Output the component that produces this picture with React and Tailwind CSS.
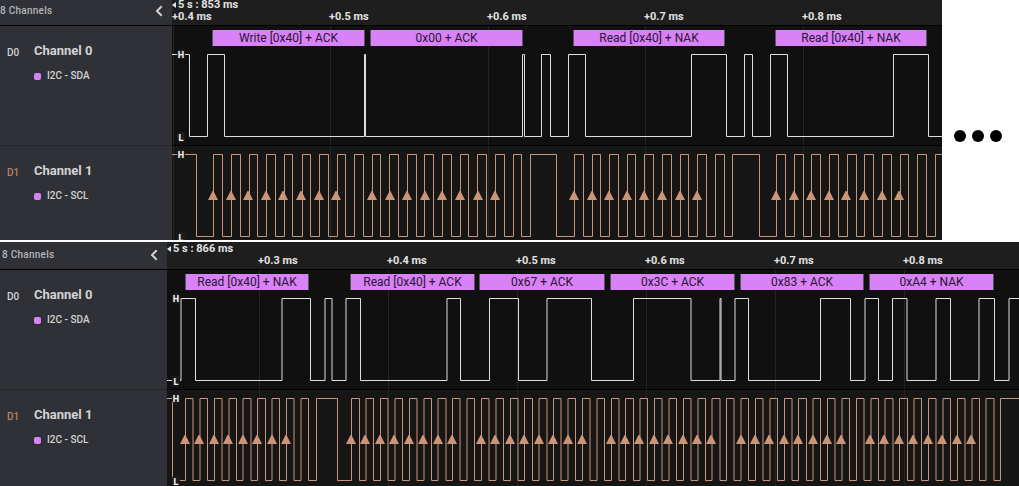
import React from "react";

const round = (x) => Math.round(x * 2) / 2;

// Clock edges for `count` pulses: rise, fall, rise, fall ...
function pulses(start, count, period = 14.43, high = 7.6) {
  const edges = [];
  for (let n = 0; n < count; n++) {
    edges.push(round(start + n * period), round(start + n * period + high));
  }
  return edges;
}

// Sampling arrows sit on the first eight clock rises of every byte.
function samples(starts, period) {
  return starts.flatMap((s) => Array.from({ length: 8 }, (_, n) => Math.round(s + n * period)));
}

const CAPTURES = [
  {
    id: "write",
    origin: "5 s : 853 ms",
    sidebar: "w-[172px]",
    header: "h-[26px]",
    inset: "pl-0",
    clockRow: "h-[94px]",
    ticks: [
      { x: 1, label: "+0.4 ms" },
      { x: 158, label: "+0.5 ms" },
      { x: 316, label: "+0.6 ms" },
      { x: 473, label: "+0.7 ms" },
      { x: 631, label: "+0.8 ms" },
    ],
    frames: [
      { x: 40, w: 153, text: "Write [0x40] + ACK" },
      { x: 198, w: 153, text: "0x00 + ACK" },
      { x: 401, w: 152, text: "Read [0x40] + NAK" },
      { x: 603, w: 152, text: "Read [0x40] + NAK" },
    ],
    sda: {
      high: true,
      edges: [17, 35, 52, 192, 193, 350, 352, 369, 378, 396, 413, 519, 554, 572, 580, 598, 615, 721, 756],
    },
    scl: {
      high: true,
      edges: [
        24, 41, 50, 59, 68, 77, 85, 94, 103, 112, 120, 130, 138, 147, 156, 165, 173, 182, 191, 200, 208, 217,
        226, 235, 244, 252, 261, 270, 279, 288, 296, 305, 314, 323, 332, 341, 349, 358, 384, 402, 411, 420,
        428, 437, 446, 455, 463, 472, 481, 490, 499, 508, 516, 525, 534, 543, 552, 560, 587, 604, 613, 622,
        631, 639, 648, 657, 666, 675, 684, 692, 701, 710, 719, 728, 736, 745, 754, 763,
      ],
    },
    arrows: samples([41, 200, 402, 604], 17.6),
  },
  {
    id: "read",
    origin: "5 s : 866 ms",
    sidebar: "w-[167px]",
    header: "h-7",
    inset: "pl-0.5",
    clockRow: "h-24",
    ticks: [
      { x: 92, label: "+0.3 ms" },
      { x: 221, label: "+0.4 ms" },
      { x: 350, label: "+0.5 ms" },
      { x: 479, label: "+0.6 ms" },
      { x: 608, label: "+0.7 ms" },
      { x: 737, label: "+0.8 ms" },
    ],
    frames: [
      { x: 18, w: 124, text: "Read [0x40] + NAK" },
      { x: 183, w: 125, text: "Read [0x40] + ACK" },
      { x: 312, w: 126, text: "0x67 + ACK" },
      { x: 443, w: 125, text: "0x3C + ACK" },
      { x: 573, w: 124, text: "0x83 + ACK" },
      { x: 702, w: 125, text: "0xA4 + NAK" },
    ],
    sda: {
      high: false,
      edges: [
        13.5, 28, 114.5, 143, 157.5, 164.5, 178.5, 193, 279.5, 293, 322, 351, 379.5, 424, 466, 523.5, 552.5,
        553.5, 567.5, 581, 653, 683, 697.5, 711, 725, 739.5, 768.5, 783, 811.5, 827, 841.5,
      ],
    },
    scl: {
      high: true,
      edges: [5, ...pulses(18, 9), 149, 170, ...pulses(184.2, 45, 14.42), 833],
    },
    arrows: samples([18, 184, 314, 443.5, 573.5, 703], 14.42),
  },
];

function wavePath({ high, edges }, top, bottom) {
  let y = high ? top : bottom;
  let d = `M-1 ${y}`;
  edges.forEach((x) => {
    y = y === top ? bottom : top;
    d += `H${x}V${y}`;
  });
  return d + "H4000";
}

function Level({ y, children }) {
  return (
    <g>
      <rect x="5" y={y - 5} width="8" height="10" rx="2" fill="#1c1c1c" />
      <text x="9" y={y + 3.5} textAnchor="middle" fill="#f2f2f2" className="font-['Roboto'] text-[9px] font-extrabold">
        {children}
      </text>
    </g>
  );
}

function Wave({ wave, top, color, ticks, arrows = [] }) {
  const bottom = top + 82;
  return (
    <svg className="block h-full w-full overflow-hidden" aria-hidden="true">
      {ticks.map((t) => (
        <rect key={t.x} x={t.x} y="0" width="1" height="100%" fill="#242424" />
      ))}
      <path
        d={wavePath(wave, top, bottom)}
        transform="translate(.5 .5)"
        fill="none"
        stroke={color}
        strokeWidth="1"
      />
      {arrows.map((x) => (
        <path key={x} d={`M${x - 0.5} ${top + 37}h1l4.500 9h-10z`} fill={color} />
      ))}
      <Level y={top}>H</Level>
      <Level y={top + 83}>L</Level>
    </svg>
  );
}

function ChannelInfo({ pin, pinColor, name, analyzer }) {
  return (
    <div className="flex pt-[17px]">
      <span className={`w-[34px] flex-none pt-0.5 pl-[7px] text-[10px] leading-4 font-medium ${pinColor}`}>{pin}</span>
      <div>
        <h2 className="text-[13px] leading-4 font-bold text-[#d2d3d5]">{name}</h2>
        <div className="mt-2 flex items-center gap-1.5 text-[10px] leading-[18px] font-medium text-[#d2d3d5]">
          <span className="h-[7px] w-[7px] rounded-xs bg-[#d982f8]" />
          {analyzer}
        </div>
      </div>
    </div>
  );
}

function Capture({ capture }) {
  const { sidebar, header, inset, clockRow, ticks } = capture;
  return (
    <section className="flex min-w-0 flex-1 overflow-hidden bg-[#101010]">
      <aside className={`flex-none bg-[#303136] ${sidebar}`}>
        <div className={`flex items-end justify-between border-b border-black pr-[7px] pb-1.5 ${header} ${inset}`}>
          <span className="text-[10px] leading-4 font-medium tracking-wide text-[#b4b5b8]">8 Channels</span>
          <button type="button" aria-label="Collapse channels" className="flex h-4 w-3 items-center justify-center">
            <svg width="8" height="12" viewBox="0 0 8 12" fill="none" stroke="#d0d0d2" strokeWidth="2">
              <path d="M6.700 1.200L2 6l4.700 4.800" />
            </svg>
          </button>
        </div>
        <div className="h-[120px] border-b border-[#26272b]">
          <ChannelInfo pin="D0" pinColor="text-[#d2d3d5]" name="Channel 0" analyzer="I2C - SDA" />
        </div>
        <div className={clockRow}>
          <ChannelInfo pin="D1" pinColor="text-[#b98468]" name="Channel 1" analyzer="I2C - SCL" />
        </div>
      </aside>

      <div className="min-w-0 flex-1">
        <div className={`relative border-b border-black bg-[#1e1e1e] text-[11px] font-bold text-[#e2e2e2] ${header}`}>
          <div className="absolute bottom-3.5 left-0 flex items-center gap-0.5 leading-3">
            <svg width="4" height="6" viewBox="0 0 4 6" fill="#e2e2e2">
              <path d="M4 0v6L0 3z" />
            </svg>
            {capture.origin}
          </div>
          {ticks.map((t) => (
            <span key={t.x} className="absolute bottom-0.5 -ml-px leading-3 whitespace-nowrap" style={{ left: t.x }}>
              {t.label}
            </span>
          ))}
        </div>
        <div className="relative h-[120px] border-b border-black bg-[#101010]">
          <Wave wave={capture.sda} top={28} color="#dededb" ticks={ticks} />
          {capture.frames.map((f) => (
            <div
              key={f.x}
              className="absolute top-1 h-4 overflow-hidden border-x border-[#555555] bg-[#d982f8] text-center text-xs leading-4 whitespace-nowrap text-[#28152f]"
              style={{ left: f.x, width: f.w }}
            >
              {f.text}
            </div>
          ))}
        </div>
        <div className={`bg-[#161616] ${clockRow}`}>
          <Wave wave={capture.scl} top={8} color="#cc9577" ticks={ticks} arrows={capture.arrows} />
        </div>
      </div>
    </section>
  );
}

export default function App() {
  return (
    <main className="flex flex-col gap-0.5 bg-white font-['Roboto',sans-serif]">
      <div className="flex">
        <Capture capture={CAPTURES[0]} />
        <div className="flex w-[77px] flex-none items-end justify-center gap-1.5 pr-[5px] pb-[98px]">
          <span className="size-3 rounded-full bg-black" />
          <span className="size-3 rounded-full bg-black" />
          <span className="size-3 rounded-full bg-black" />
        </div>
      </div>
      <div className="flex">
        <Capture capture={CAPTURES[1]} />
      </div>
    </main>
  );
}
